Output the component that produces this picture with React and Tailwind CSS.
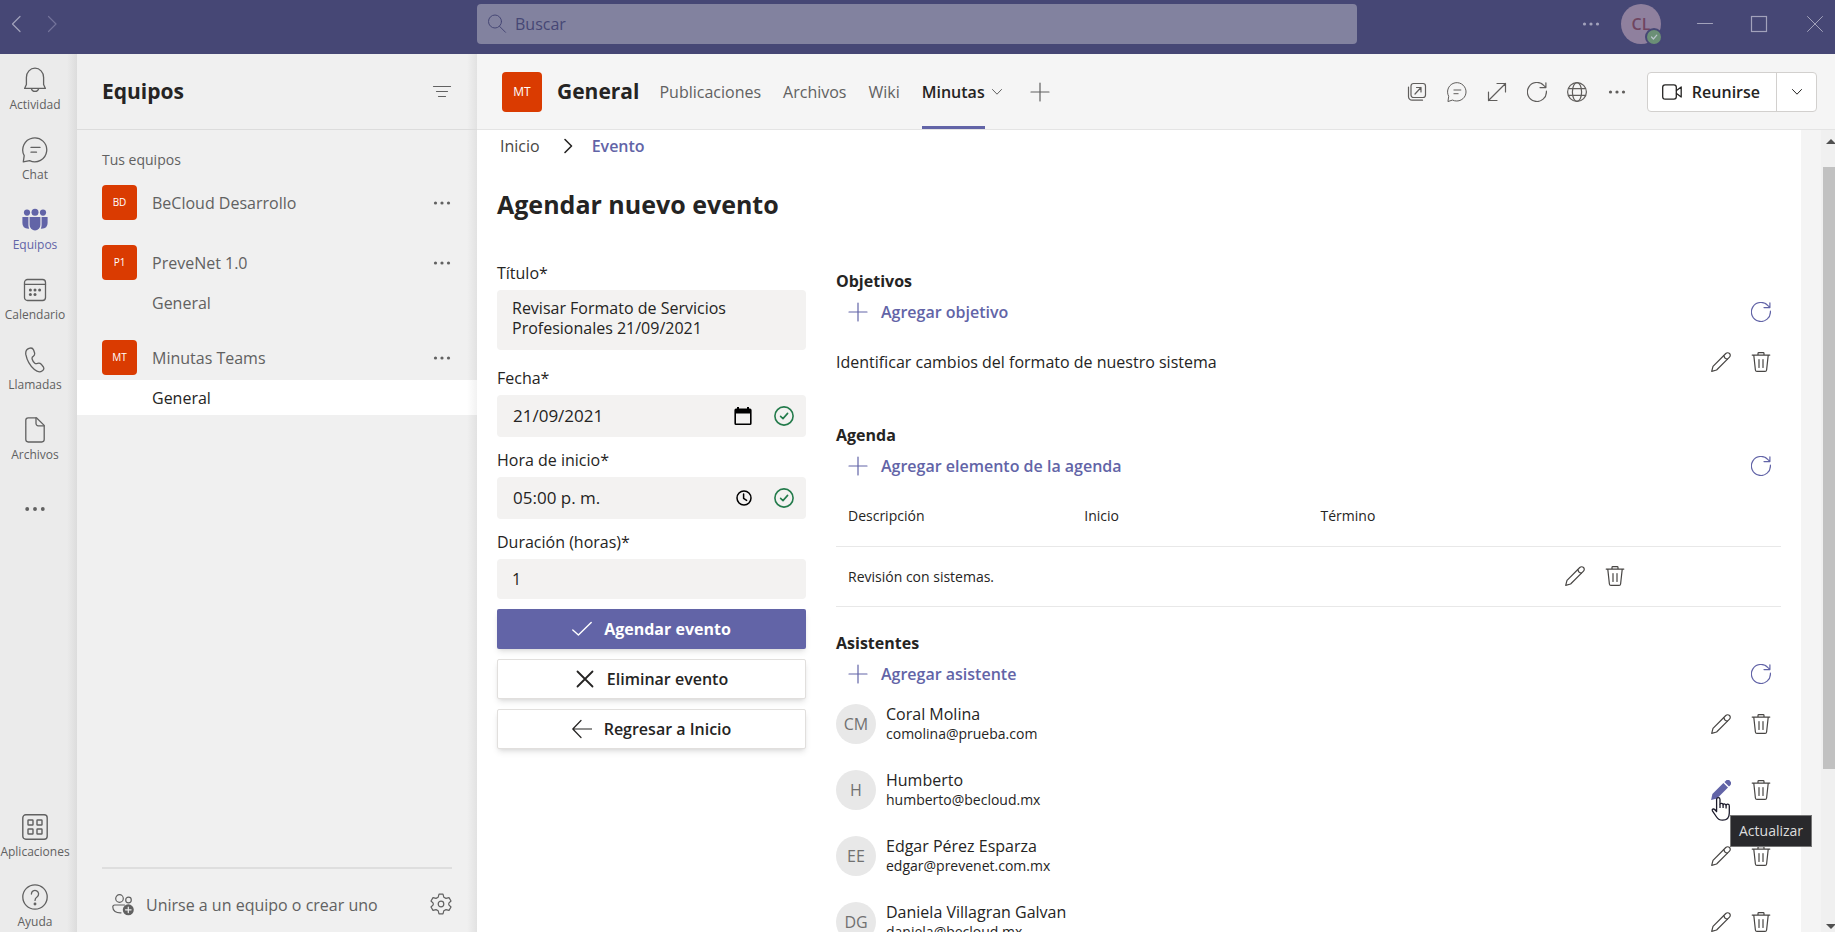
import React, { useState } from "react";

function Icon({ size = 20, box = 20, sw = 1, className = "", children }) {
  return (
    <svg
      width={size}
      height={size}
      viewBox={`0 0 ${box} ${box}`}
      fill="none"
      stroke="currentColor"
      strokeWidth={sw}
      strokeLinecap="round"
      strokeLinejoin="round"
      className={`shrink-0 ${className}`}
      aria-hidden="true"
    >
      {children}
    </svg>
  );
}

const BellIcon = () => (
  <Icon size={26} box={26} sw={1.3}>
    <path d="M4.4 10.4A8.6 9.2 0 0 1 21.6 10.4V17.4L23.4 21.4H2.6L4.4 17.4Z" />
    <path d="M9.4 21.8a3.7 3.4 0 0 0 7.2 0" />
  </Icon>
);

const ChatIcon = ({ size = 26 }) => (
  <Icon size={size} box={26} sw={1.3}>
    <path d="M1.3 24.9L2.2 18.6A12 12 0 1 1 7.6 23.7Z" />
    <path d="M9 10.4H18M9 15.2H14.5" />
  </Icon>
);

const TeamsIcon = () => (
  <Icon size={26} box={26} sw={0}>
    <g fill="currentColor">
      <circle cx="13" cy="5.2" r="3.5" />
      <circle cx="5" cy="5.6" r="3.1" />
      <circle cx="21" cy="5.6" r="3.1" />
      <path d="M7.6 10H18.4V18a5.4 5.4 0 0 1-10.8 0Z" />
      <path d="M0.4 10H6.4V18q0 2 .8 3.6Q0.4 22 0.4 16Z" />
      <path d="M25.6 10H19.6V18q0 2-.8 3.6Q25.6 22 25.6 16Z" />
    </g>
  </Icon>
);

const CalendarIcon = () => (
  <Icon size={26} box={26} sw={1.3}>
    <rect x="2.5" y="2.5" width="21" height="21" rx="3" />
    <path d="M2.5 7.3H23.5" />
    <g fill="currentColor" stroke="none">
      <circle cx="8.4" cy="13" r="1.5" />
      <circle cx="13" cy="13" r="1.5" />
      <circle cx="17.6" cy="13" r="1.5" />
      <circle cx="8.4" cy="17.6" r="1.5" />
      <circle cx="13" cy="17.6" r="1.5" />
    </g>
  </Icon>
);

const PhoneIcon = () => (
  <Icon size={26} box={26} sw={1.3}>
    <path d="M7 1.4Q10.4 0.2 11.6 3L12.6 6Q13 8.2 11.2 9.4Q9.6 10.4 10.2 12.2Q11 14.8 12.8 16.2Q13.8 17 15.4 16.4Q17.6 15.4 19.2 17.2L21.4 20Q22.6 22.2 20.4 23.8Q16.8 26.4 12.4 22.6Q5.6 16.6 3.8 7.4Q3.2 2.8 7 1.4Z" />
  </Icon>
);

const FileIcon = () => (
  <Icon size={26} box={26} sw={1.3}>
    <path d="M6.2 0.8H14.4L22.2 8.4V22.6a2.4 2.4 0 0 1-2.4 2.4H6.2a2.4 2.4 0 0 1-2.4-2.4V3.2A2.4 2.4 0 0 1 6.2 0.8Z" />
    <path d="M14 1V6.6a2.2 2.2 0 0 0 2.2 2.2H22" />
  </Icon>
);

const AppsIcon = () => (
  <Icon size={26} box={26} sw={1.4}>
    <rect x="0.8" y="0.8" width="24.4" height="24.4" rx="3" />
    <rect x="6" y="6" width="5" height="5" rx="0.6" />
    <rect x="15" y="6" width="5" height="5" rx="0.6" />
    <rect x="6" y="15" width="5" height="5" rx="0.6" />
    <rect x="15" y="15" width="5" height="5" rx="0.6" />
  </Icon>
);

const HelpIcon = () => (
  <Icon size={26} box={26} sw={1.3}>
    <circle cx="13" cy="13" r="12.2" />
    <path d="M9.4 10a3.6 3.6 0 1 1 5.6 3Q13 14.4 13 16.4" />
    <circle cx="13" cy="20" r="0.8" fill="currentColor" />
  </Icon>
);

const DotsIcon = ({ size = 20 }) => (
  <Icon size={size} sw={0}>
    <g fill="currentColor">
      <circle cx="3.5" cy="10" r="1.6" />
      <circle cx="10" cy="10" r="1.6" />
      <circle cx="16.5" cy="10" r="1.6" />
    </g>
  </Icon>
);

const RefreshIcon = () => (
  <Icon sw={1.2}>
    <path d="M19.4 9.2A9.5 9.5 0 1 1 17 3.6L18.8 5.4M18.9 0.8V5.6H13" />
  </Icon>
);

const PlusIcon = ({ sw = 1.2 }) => (
  <Icon sw={sw}>
    <path d="M10 1V19M1 10H19" />
  </Icon>
);

const PencilIcon = ({ filled }) =>
  filled ? (
    <Icon sw={0}>
      <g fill="currentColor">
        <path d="M0.1 19.9L1.4 14L12.4 3L17 7.6L6 18.6Z" />
        <path d="M13.4 2L14.6 0.9A3.1 3.1 0 0 1 19.1 5.4L18 6.6Z" />
      </g>
    </Icon>
  ) : (
    <Icon sw={1.2}>
      <path d="M0.7 19.3L2 14.4L14.8 1.5A2.6 2.6 0 0 1 18.5 5.2L5.6 18Z" />
      <path d="M12.8 3.6Q13.4 6.6 16.4 7.2" />
    </Icon>
  );

const TrashIcon = () => (
  <Icon sw={1.2}>
    <path d="M1.2 3.1H18.8M7 3V1.4a.8.8 0 0 1 .8-.8H12.2a.8.8 0 0 1 .8.8V3M2.8 3.4L4.4 18a1.6 1.6 0 0 0 1.6 1.4H14A1.6 1.6 0 0 0 15.6 18L17.2 3.4" />
    <path d="M8 7.5V15.5M12 7.5V15.5" />
  </Icon>
);

const ChevronDown = () => (
  <Icon size={12} box={12}>
    <path d="M1.5 3.5L6 8.2L10.5 3.5" />
  </Icon>
);

const CheckCircle = () => (
  <Icon sw={1.6} className="text-[#237b4b]">
    <circle cx="10" cy="10" r="9.1" />
    <path d="M6.6 10.4L9 12.6L13.6 7.4" />
  </Icon>
);

const navItems = [
  { label: "Actividad", icon: <BellIcon /> },
  { label: "Chat", icon: <ChatIcon /> },
  { label: "Equipos", icon: <TeamsIcon />, active: true },
  { label: "Calendario", icon: <CalendarIcon /> },
  { label: "Llamadas", icon: <PhoneIcon /> },
  { label: "Archivos", icon: <FileIcon /> },
];

const bottomItems = [
  { label: "Aplicaciones", icon: <AppsIcon /> },
  { label: "Ayuda", icon: <HelpIcon /> },
];

const teams = [
  { initials: "BD", name: "BeCloud Desarrollo", channels: [] },
  { initials: "P1", name: "PreveNet 1.0", channels: [{ name: "General" }] },
  { initials: "MT", name: "Minutas Teams", channels: [{ name: "General", selected: true }] },
];

const attendees = [
  { initials: "CM", name: "Coral Molina", email: "comolina@prueba.com" },
  { initials: "H", name: "Humberto", email: "humberto@becloud.mx", hovered: true },
  { initials: "EE", name: "Edgar Pérez Esparza", email: "edgar@prevenet.com.mx" },
  { initials: "DG", name: "Daniela Villagran Galvan", email: "daniela@becloud.mx" },
];

function TopBar() {
  return (
    <header className="flex h-[54px] shrink-0 items-start bg-[#464775] pt-1 text-[#a2a2bb]">
      <div className="flex h-10 w-[477px] shrink-0 items-center gap-4 pl-1.5">
        <button aria-label="Atrás">
          <Icon sw={1.2}>
            <path d="M14 2.5L6.5 10L14 17.5" />
          </Icon>
        </button>
        <button aria-label="Adelante" className="text-[#73739a]">
          <Icon sw={1.2}>
            <path d="M6.5 2.5L14 10L6.5 17.5" />
          </Icon>
        </button>
      </div>
      <div className="flex h-10 flex-1 items-center gap-2 rounded bg-[#82829f] px-2.5 text-[#464775]">
        <Icon>
          <circle cx="8" cy="7.5" r="6.5" />
          <path d="M12.6 12.4L18.5 18.3" />
        </Icon>
        <input
          aria-label="Buscar"
          placeholder="Buscar"
          className="w-full bg-transparent text-[16px] outline-none placeholder:text-[#464775]"
        />
      </div>
      <div className="flex h-10 w-[478px] shrink-0 items-center justify-end pr-2.5">
        <button aria-label="Más opciones" className="mr-5">
          <DotsIcon />
        </button>
        <button className="relative mr-[34px] flex size-10 items-center justify-center rounded-full bg-[#8f809e] text-[16px] font-semibold text-[#6f4560]">
          CL
          <span className="absolute right-0 bottom-0 flex size-[14px] items-center justify-center rounded-full bg-[#6b8f76] ring-2 ring-[#464775]">
            <Icon size={8} box={8} sw={1.2} className="text-[#b9c4cb]">
              <path d="M1.5 4L3.4 6L6.8 2.2" />
            </Icon>
          </span>
        </button>
        <button aria-label="Minimizar" className="mr-[34px]">
          <Icon sw={1.2}>
            <path d="M2.5 9.5H17.5" />
          </Icon>
        </button>
        <button aria-label="Maximizar" className="mr-9">
          <Icon sw={1.2}>
            <rect x="2.5" y="2.5" width="15" height="15" strokeLinejoin="miter" />
          </Icon>
        </button>
        <button aria-label="Cerrar">
          <Icon>
            <path d="M2.5 2.5L17.5 17.5M17.5 2.5L2.5 17.5" />
          </Icon>
        </button>
      </div>
    </header>
  );
}

function RailItem({ item }) {
  return (
    <button
      className={`flex h-12 w-[70px] flex-col items-center gap-0.5 text-[12px] leading-5 ${
        item.active ? "text-[#6264a7]" : "text-[#616161]"
      }`}
    >
      {item.icon}
      {item.label}
    </button>
  );
}

function Rail() {
  return (
    <nav className="flex w-[77px] shrink-0 flex-col gap-[22px] bg-[linear-gradient(to_left,#dcdcdc,#ebebeb_10px)] pt-[13px]">
      {navItems.map((item) => (
        <RailItem key={item.label} item={item} />
      ))}
      <button aria-label="Más aplicaciones" className="flex h-11 w-[70px] items-center justify-center text-[#616161]">
        <DotsIcon size={24} />
      </button>
      <div className="mt-auto flex flex-col gap-[22px]">
        {bottomItems.map((item) => (
          <RailItem key={item.label} item={item} />
        ))}
      </div>
    </nav>
  );
}

function Sidebar() {
  return (
    <aside className="flex w-[400px] shrink-0 flex-col bg-[linear-gradient(to_left,#e2e2e2,#f0f0f0_10px)] text-[#616161]">
      <div className="flex h-19 shrink-0 items-center justify-between border-b border-[#dcdcdc] pr-[25px] pl-[25px]">
        <h2 className="text-[21px] font-bold text-[#252423]">Equipos</h2>
        <button aria-label="Filtrar">
          <Icon sw={1.2}>
            <path d="M1.5 4.5H18.5M4.5 9.5H15.5M6.5 14.5H13.5" />
          </Icon>
        </button>
      </div>
      <p className="mt-5 mb-[15px] pl-[25px] text-[14px] leading-5">Tus equipos</p>
      <div className="flex flex-col gap-5">
        {teams.map((team) => (
          <div key={team.initials}>
            <div className="mb-[5px] flex h-[35px] items-center pr-[25px] pl-[25px]">
              <span className="mr-[15px] flex size-[35px] items-center justify-center rounded bg-[#da3b01] text-[10px] text-white">
                {team.initials}
              </span>
              <span className="text-[16px]">{team.name}</span>
              <button aria-label="Más opciones" className="ml-auto">
                <DotsIcon />
              </button>
            </div>
            {team.channels.map((channel) => (
              <a
                key={channel.name}
                href="#general"
                className={`flex h-[35px] items-center pl-[75px] text-[16px] ${
                  channel.selected
                    ? "bg-[linear-gradient(to_left,#f2f2f2,#ffffff_10px)] text-[#252423]"
                    : ""
                }`}
              >
                {channel.name}
              </a>
            ))}
          </div>
        ))}
      </div>
      <div className="mt-auto mr-[25px] ml-[25px] flex h-[65px] items-start border-t-2 border-[#dedede] pt-6 pl-2.5">
        <button className="flex items-center gap-3 text-[16px] leading-6">
          <Icon size={22} box={22} sw={1.2}>
            <circle cx="7.5" cy="4.5" r="3.8" />
            <circle cx="16.5" cy="6" r="2.8" />
            <path d="M12.5 11H2.6A1.9 1.9 0 0 0 .8 13C.8 17 4 19 9 18.8" />
            <circle cx="16.3" cy="15.8" r="5.5" fill="currentColor" stroke="none" />
            <path d="M16.3 13V18.6M13.5 15.8H19.1" stroke="#f0f0f0" />
          </Icon>
          Unirse a un equipo o crear uno
        </button>
        <button aria-label="Configuración" className="ml-auto">
          <Icon size={22} box={22} sw={1.2}>
            <circle cx="11" cy="11" r="2.8" />
            <path d="M9 1.2H13L13.8 4.2L16 5.4L19 4.6L21 8L18.8 10.2V11.8L21 14L19 17.4L16 16.6L13.8 17.8L13 20.8H9L8.2 17.8L6 16.6L3 17.4L1 14L3.2 11.8V10.2L1 8L3 4.6L6 5.4L8.2 4.2Z" />
          </Icon>
        </button>
      </div>
    </aside>
  );
}

function ChannelHeader() {
  return (
    <div className="flex h-19 shrink-0 items-center border-b border-[#e4e4e4] bg-[#f5f5f5] pr-[18px] pl-[25px]">
      <span className="flex size-10 items-center justify-center rounded bg-[#da3b01] text-[12px] text-white">MT</span>
      <h1 className="ml-[15px] text-[21px] font-bold text-[#252423]">General</h1>
      <nav className="ml-5 flex h-full items-center gap-[22px] text-[16px] text-[#616161]">
        <a href="#publicaciones">Publicaciones</a>
        <a href="#archivos">Archivos</a>
        <a href="#wiki">Wiki</a>
        <a
          href="#minutas"
          className="flex h-full items-center border-t-3 border-b-3 border-t-transparent border-b-[#6264a7] font-semibold text-[#252423]"
        >
          Minutas
        </a>
      </nav>
      <button aria-label="Opciones de Minutas" className="ml-1.5 text-[#616161]">
        <ChevronDown />
      </button>
      <button aria-label="Agregar pestaña" className="ml-[27px] text-[#616161]">
        <PlusIcon />
      </button>
      <div className="ml-auto flex items-center gap-5 text-[#605e5c]">
        <button aria-label="Abrir en ventana">
          <Icon sw={1.2}>
            <rect x="4" y="1.5" width="14.5" height="14" rx="2.5" />
            <path d="M1.5 5V14.5A3.6 3.6 0 0 0 5.1 18.2H15.5M8 12L14 5.5M9.5 5.5H14V10" />
          </Icon>
        </button>
        <button aria-label="Conversación">
          <ChatIcon size={20} />
        </button>
        <button aria-label="Expandir">
          <Icon sw={1.2}>
            <path d="M1.5 18.5L18.5 1.5M10 1.5H18.5V10M1.5 10V18.5H10" />
          </Icon>
        </button>
        <button aria-label="Recargar">
          <RefreshIcon />
        </button>
        <button aria-label="Sitio web">
          <Icon sw={1.2}>
            <circle cx="10" cy="10" r="9.4" />
            <ellipse cx="10" cy="10" rx="4.6" ry="9.4" />
            <path d="M1.5 6.6H18.5M1.5 13.4H18.5" />
          </Icon>
        </button>
        <button aria-label="Más opciones">
          <DotsIcon />
        </button>
        <div className="flex h-10 rounded border border-[#d2d0ce] bg-white text-[#252423]">
          <button className="flex items-center gap-2.5 pr-4 pl-3.5 text-[16px] font-semibold">
            <Icon sw={1.3}>
              <rect x="0.7" y="2.8" width="13.6" height="14.4" rx="2.4" />
              <path d="M14.5 8.5L19.2 5V15L14.5 11.5" />
            </Icon>
            Reunirse
          </button>
          <button aria-label="Opciones de reunión" className="flex w-10 items-center justify-center border-l border-[#d2d0ce]">
            <ChevronDown />
          </button>
        </div>
      </div>
    </div>
  );
}

function Label({ htmlFor, children }) {
  return (
    <label htmlFor={htmlFor} className="mt-[13px] mb-[7px] block text-[16px] leading-5 text-[#252423]">
      {children}
    </label>
  );
}

function EventForm() {
  const [title, setTitle] = useState("Revisar Formato de Servicios Profesionales 21/09/2021");
  const [date, setDate] = useState("21/09/2021");
  const [time, setTime] = useState("05:00 p. m.");
  const [hours, setHours] = useState("1");

  return (
    <form className="w-[309px] shrink-0" onSubmit={(e) => e.preventDefault()}>
      <Label htmlFor="titulo">Título*</Label>
      <textarea
        id="titulo"
        value={title}
        onChange={(e) => setTitle(e.target.value)}
        className="mb-[18px] block h-15 w-full resize-none rounded bg-[#f3f2f1] px-[15px] py-2 text-[16px] leading-5 text-[#252423] outline-none"
      />

      <Label htmlFor="fecha">Fecha*</Label>
      <div className="flex h-[42px] items-center rounded bg-[#f3f2f1] pr-3">
        <input
          id="fecha"
          value={date}
          onChange={(e) => setDate(e.target.value)}
          className="w-full min-w-0 bg-transparent pl-4 text-[17px] text-[#252423] outline-none"
        />
        <Icon size={18} box={18} sw={0} className="mr-[22px] text-black">
          <path
            fill="currentColor"
            fillRule="evenodd"
            d="M3 0H5V1.6H13V0H15V1.6H16A1.6 1.6 0 0 1 17.6 3.2V16.4A1.6 1.6 0 0 1 16 18H2A1.6 1.6 0 0 1 .4 16.4V3.2A1.6 1.6 0 0 1 2 1.6H3ZM2 6.4V16.4H16V6.4Z"
          />
        </Icon>
        <CheckCircle />
      </div>

      <Label htmlFor="hora">Hora de inicio*</Label>
      <div className="flex h-[42px] items-center rounded bg-[#f3f2f1] pr-3">
        <input
          id="hora"
          value={time}
          onChange={(e) => setTime(e.target.value)}
          className="w-full min-w-0 bg-transparent pl-4 text-[17px] text-[#252423] outline-none"
        />
        <Icon size={16} box={16} sw={1.5} className="mr-[22px] text-black">
          <circle cx="8" cy="8" r="7" />
          <path d="M7.6 4V8.4L10.6 10.4" />
        </Icon>
        <CheckCircle />
      </div>

      <Label htmlFor="duracion">Duración (horas)*</Label>
      <input
        id="duracion"
        value={hours}
        onChange={(e) => setHours(e.target.value)}
        className="block h-10 w-full rounded bg-[#f3f2f1] px-[15px] text-[16px] text-[#252423] outline-none"
      />

      <div className="mt-2.5 flex flex-col gap-2.5 text-[16px] font-semibold text-[#252423]">
        <button
          type="submit"
          className="flex h-10 items-center justify-center gap-3 rounded-xs bg-[#6264a7] font-bold text-white shadow-md"
        >
          <Icon sw={1.4}>
            <path d="M0.8 11L6.4 16L19.2 3.4" />
          </Icon>
          Agendar evento
        </button>
        <button
          type="button"
          className="flex h-10 items-center justify-center gap-3 rounded-xs border border-[#e1dfdd] bg-white shadow-md"
        >
          <Icon sw={1.8}>
            <path d="M2.5 2.5L17.5 17.5M17.5 2.5L2.5 17.5" />
          </Icon>
          Eliminar evento
        </button>
        <button
          type="button"
          className="flex h-10 items-center justify-center gap-3 rounded-xs border border-[#e1dfdd] bg-white shadow-md"
        >
          <Icon sw={1.2}>
            <path d="M9 1.5L0.8 10L9 18.5M0.8 10H19.5" />
          </Icon>
          Regresar a Inicio
        </button>
      </div>
    </form>
  );
}

function SectionHeader({ title, action }) {
  return (
    <>
      <h3 className="text-[16px] leading-[22px] font-bold text-[#252423]">{title}</h3>
      <div className="flex h-10 items-center justify-between text-[#6264a7]">
        <button className="flex items-center gap-[13px] pl-3 text-[16px] font-semibold">
          <PlusIcon />
          {action}
        </button>
        <button aria-label="Recargar" className="flex size-10 items-center justify-center">
          <RefreshIcon />
        </button>
      </div>
    </>
  );
}

function RowActions({ hovered }) {
  return (
    <div className="flex shrink-0 text-[#484644]">
      <button
        aria-label="Actualizar"
        className={`relative flex size-10 items-center justify-center ${hovered ? "text-[#6264a7]" : ""}`}
      >
        <PencilIcon filled={hovered} />
        {hovered && (
          <>
            <svg
              width="20"
              height="24"
              viewBox="0 0 20 24"
              fill="#fff"
              stroke="#1b1a2b"
              strokeWidth="1.3"
              strokeLinejoin="round"
              className="absolute top-[27px] left-[10px] z-10"
            >
              <path d="M5.6 14.6V2.4a1.7 1.7 0 0 1 3.4 0V7.4a1.6 1.6 0 0 1 3.1.4a1.6 1.6 0 0 1 3 .7a1.6 1.6 0 0 1 3.2.6V16Q18.3 23.2 11.6 23.2Q7.6 23.2 5.6 20L1.4 13.8Q.8 12 2.6 12Q4 12.2 5.6 14.6Z" />
              <path d="M9 7.4V11M12.1 7.8V11M15.1 8.6V11.6" />
            </svg>
            <span
              role="tooltip"
              className="absolute top-[45px] left-[29px] z-10 border border-[#767676] bg-[#29292c] px-2 text-[14px] leading-[30px] text-[#dddddd]"
            >
              Actualizar
            </span>
          </>
        )}
      </button>
      <button aria-label="Eliminar" className="flex size-10 items-center justify-center">
        <TrashIcon />
      </button>
    </div>
  );
}

function Details() {
  return (
    <div className="min-w-0 flex-1 pt-5 text-[#252423]">
      <section className="mb-[42px]">
        <SectionHeader title="Objetivos" action="Agregar objetivo" />
        <div className="mt-2.5 flex h-10 items-center justify-between">
          <p className="text-[16px]">Identificar cambios del formato de nuestro sistema</p>
          <RowActions />
        </div>
      </section>

      <section className="mb-[25px]">
        <SectionHeader title="Agenda" action="Agregar elemento de la agenda" />
        <table className="w-full table-fixed text-left text-[14px]">
          <thead>
            <tr className="h-15 border-b border-[#e8e8e8]">
              <th className="px-3 font-normal">Descripción</th>
              <th className="px-3 font-normal">Inicio</th>
              <th className="px-3 font-normal">Término</th>
              <th aria-label="Acciones"></th>
            </tr>
          </thead>
          <tbody>
            <tr className="h-15 border-b border-[#e8e8e8]">
              <td className="px-3">Revisión con sistemas.</td>
              <td></td>
              <td></td>
              <td className="px-2.5">
                <RowActions />
              </td>
            </tr>
          </tbody>
        </table>
      </section>

      <section>
        <SectionHeader title="Asistentes" action="Agregar asistente" />
        <ul className="mt-2.5 flex flex-col gap-[26px]">
          {attendees.map((person) => (
            <li key={person.email} className="flex h-10 items-center">
              <span className="mr-2.5 flex size-10 items-center justify-center rounded-full bg-[#e8e8e8] text-[16px] text-[#717171]">
                {person.initials}
              </span>
              <div className="mr-auto">
                <p className="text-[16px] leading-5">{person.name}</p>
                <p className="text-[14px] leading-5">{person.email}</p>
              </div>
              <RowActions hovered={person.hovered} />
            </li>
          ))}
        </ul>
      </section>
    </div>
  );
}

function ScrollBar() {
  return (
    <div className="flex w-[14px] shrink-0 flex-col items-end overflow-hidden bg-[#f0f0f0] text-[#505050]">
      <svg width="10" height="37" viewBox="0 0 10 37" fill="currentColor" className="shrink-0">
        <path d="M1 14L6 9L11 14Z" />
      </svg>
      <div className="h-3/4 w-3 bg-[#c1c1c1]" />
      <svg width="10" height="10" viewBox="0 0 10 10" fill="currentColor" className="mt-auto shrink-0">
        <path d="M1 2L6 7L11 2Z" />
      </svg>
    </div>
  );
}

export default function App() {
  return (
    <div className="flex h-screen flex-col overflow-hidden font-['Open_Sans',sans-serif]">
      <TopBar />
      <div className="flex min-h-0 flex-1">
        <Rail />
        <Sidebar />
        <main className="flex min-w-0 flex-1 flex-col">
          <ChannelHeader />
          <div className="flex min-h-0 flex-1">
            <div className="min-w-0 flex-1 overflow-hidden bg-[linear-gradient(to_left,#f4f4f4_20px,#ffffff_20px)] pr-10 pl-5">
              <nav className="flex h-8 items-center pl-[3px] text-[16px] text-[#484644]">
                <a href="#inicio" className="font-medium">
                  Inicio
                </a>
                <Icon size={16} box={16} sw={1.6} className="mr-4 ml-5 text-[#252423]">
                  <path d="M5 1.5L11.5 8L5 14.5" />
                </Icon>
                <a href="#evento" className="font-semibold text-[#6264a7]">
                  Evento
                </a>
              </nav>
              <h2 className="mt-6 mb-7 text-[25px] leading-[36px] font-bold text-[#252423]">
                Agendar nuevo evento
              </h2>
              <div className="flex items-start gap-[30px]">
                <EventForm />
                <Details />
              </div>
            </div>
            <ScrollBar />
          </div>
        </main>
      </div>
    </div>
  );
}
